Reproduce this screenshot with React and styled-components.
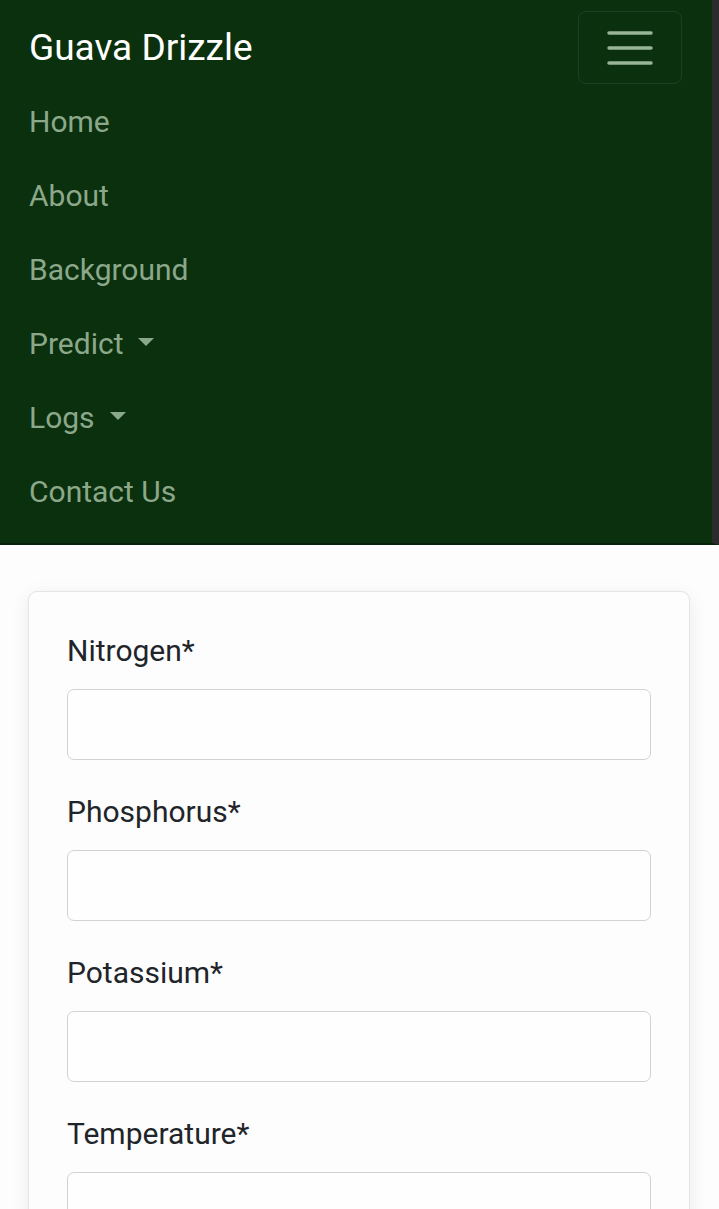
import React from "react";
import styled, { createGlobalStyle } from "styled-components";

const GlobalStyle = createGlobalStyle`
  * {
    box-sizing: border-box;
  }

  body {
    margin: 0;
    background: #fdfdfd;
    font-family: Roboto, "Liberation Sans", sans-serif;
  }
`;

const Navbar = styled.nav`
  background: #0b300d;
  padding: 11px 0 15px 29px;
  border-bottom: 2px solid #06200a;
  border-right: 7px solid #2c2c2c;
`;

const TopRow = styled.div`
  display: flex;
  align-items: center;
  justify-content: space-between;
  padding-right: 30px;
`;

const Brand = styled.a`
  font-size: 37px;
  color: #ffffff;
  text-decoration: none;
  line-height: 1;
`;

const Toggler = styled.button`
  width: 104px;
  height: 73px;
  display: flex;
  align-items: center;
  justify-content: center;
  background: transparent;
  border: 1.5px solid #1f3f21;
  border-radius: 8px;
  padding: 0;
`;

const NavList = styled.ul`
  list-style: none;
  margin: 0;
  padding: 0;
`;

const NavItem = styled.li`
  height: 74px;
  display: flex;
  align-items: center;
`;

const NavLink = styled.a`
  font-size: 30px;
  color: #8ba88b;
  text-decoration: none;
  display: flex;
  align-items: center;
`;

const Caret = styled.span`
  display: inline-block;
  margin-left: 15px;
  margin-top: -2px;
  border-top: 8px solid #8ba88b;
  border-left: 8.5px solid transparent;
  border-right: 8.5px solid transparent;
`;

const Main = styled.main`
  padding: 46px 29px 40px 28px;
`;

const Card = styled.div`
  background: #fdfdfd;
  border: 1px solid #e4e4e4;
  border-radius: 9px;
  box-shadow: 0 4px 18px rgba(0, 0, 0, 0.08);
  padding: 38px 38px 40px 38px;
  display: flex;
  flex-direction: column;
  gap: 31px;
`;

const Field = styled.div`
  display: flex;
  flex-direction: column;
  gap: 17px;
`;

const Label = styled.label`
  font-size: 30px;
  line-height: 42px;
  color: #212529;
`;

const Input = styled.input`
  height: 71px;
  width: 100%;
  border: 1px solid #d2d2d2;
  border-radius: 7px;
  background: #fefefe;
  font-size: 26px;
  padding: 0 20px;
  font-family: inherit;
`;

const links = [
  { label: "Home" },
  { label: "About" },
  { label: "Background" },
  { label: "Predict", dropdown: true },
  { label: "Logs", dropdown: true },
  { label: "Contact Us" },
];

const fields = ["Nitrogen", "Phosphorus", "Potassium", "Temperature"];

const MenuIcon = () => (
  <svg width="48" height="36" viewBox="0 0 48 36">
    <g stroke="#98b598" strokeWidth="3.5" strokeLinecap="round">
      <line x1="3" y1="3" x2="45" y2="3" />
      <line x1="3" y1="18" x2="45" y2="18" />
      <line x1="3" y1="33" x2="45" y2="33" />
    </g>
  </svg>
);

const App = () => {
  return (
    <>
      <GlobalStyle />
      <Navbar>
        <TopRow>
          <Brand href="#">Guava Drizzle</Brand>
          <Toggler aria-label="Toggle navigation">
            <MenuIcon />
          </Toggler>
        </TopRow>
        <NavList>
          {links.map((link) => (
            <NavItem key={link.label}>
              <NavLink href="#">
                {link.label}
                {link.dropdown && <Caret />}
              </NavLink>
            </NavItem>
          ))}
        </NavList>
      </Navbar>
      <Main>
        <Card>
          {fields.map((name) => (
            <Field key={name}>
              <Label>{name}*</Label>
              <Input type="text" />
            </Field>
          ))}
        </Card>
      </Main>
    </>
  );
};

export default App;
